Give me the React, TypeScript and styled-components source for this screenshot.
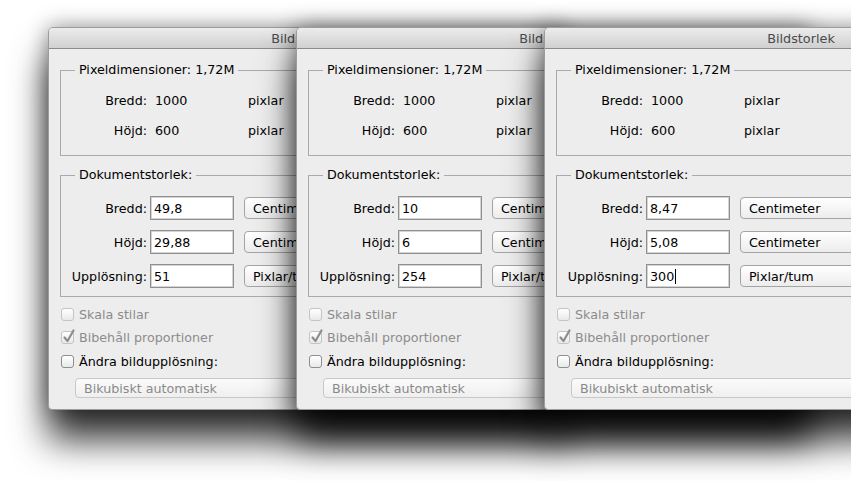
import styled, { createGlobalStyle } from "styled-components";

const GlobalStyle = createGlobalStyle`
  html, body {
    margin: 0;
    padding: 0;
    background: #fff;
  }
  body {
    font-family: "DejaVu Sans", "Liberation Sans", sans-serif;
  }
`;

const Desktop = styled.div`
  position: relative;
  width: 851px;
  height: 481px;
  overflow: hidden;
  background: #fff;
`;

const Window = styled.div<{ $left: number }>`
  position: absolute;
  top: 27px;
  left: ${(p) => p.$left}px;
  width: 514px;
  height: 383px;
  box-sizing: border-box;
  display: flex;
  flex-direction: column;
  background: #ededed;
  border: 1px solid #9c9c9c;
  border-radius: 5px 5px 4px 4px;
  box-shadow: 0 30px 36px rgba(0, 0, 0, 0.8), 0 0 22px rgba(0, 0, 0, 0.42);
  font-size: 12.7px;
  color: #000;
`;

const TitleBar = styled.div`
  flex: none;
  height: 20px;
  display: flex;
  align-items: center;
  justify-content: center;
  border-bottom: 1px solid #8b8b8b;
  border-radius: 4px 4px 0 0;
  background: linear-gradient(#ececec, #d0d0d0);
  font-size: 12.8px;
  color: #4a4a4a;
`;

const Body = styled.div`
  display: flex;
  flex-direction: column;
  padding: 13px 0 0 11px;
`;

const Group = styled.fieldset<{ $pad: string; $gap: number }>`
  margin: 0 0 11px 0;
  width: 400px;
  min-inline-size: 0;
  box-sizing: border-box;
  border: 1px solid #aaaaaa;
  padding: ${(p) => p.$pad};
  display: flex;
  flex-direction: column;
  gap: ${(p) => p.$gap}px;
`;

const Legend = styled.legend`
  margin-left: 14px;
  padding: 0 4px;
  line-height: 16px;
`;

const FieldRow = styled.div<{ $h: number }>`
  display: grid;
  grid-template-columns: 86px 84px 125px;
  column-gap: 3px;
  align-items: center;
  height: ${(p) => p.$h}px;
`;

const Label = styled.span`
  text-align: right;
`;

const Value = styled.span`
  padding-left: 5px;
`;

const Unit = styled.span`
  margin-left: 7px;
  padding-left: 4px;
`;

const Input = styled.div`
  height: 24px;
  box-sizing: border-box;
  display: flex;
  align-items: center;
  padding-left: 3px;
  background: #fff;
  border: 1px solid #8f8f8f;
  box-shadow: inset 0 0 0 1px #d4d4d4;
`;

const Caret = styled.span`
  display: inline-block;
  width: 1px;
  height: 15px;
  margin-left: 1px;
  background: #000;
`;

const Popup = styled.div`
  margin-left: 7px;
  height: 22px;
  box-sizing: border-box;
  display: flex;
  align-items: center;
  padding-left: 8px;
  border: 1px solid #a4a4a4;
  border-radius: 4px;
  background: linear-gradient(#ffffff, #ececec);
  white-space: nowrap;
  overflow: hidden;
`;

const Options = styled.div`
  display: flex;
  flex-direction: column;
  gap: 3.5px;
  margin-top: -4px;
`;

const CheckRow = styled.div<{ $disabled?: boolean }>`
  height: 20px;
  display: flex;
  align-items: center;
  gap: 5px;
  padding-left: 1px;
  color: ${(p) => (p.$disabled ? "#8c8c8c" : "#000")};
`;

const Box = styled.span<{ $disabled?: boolean }>`
  position: relative;
  width: 13px;
  height: 13px;
  box-sizing: border-box;
  border: 1px solid ${(p) => (p.$disabled ? "#c4c4c4" : "#8e8e8e")};
  border-radius: 3px;
  background: linear-gradient(#ffffff, #e9e9e9);
  flex: none;
`;

const Tick = styled.svg`
  position: absolute;
  left: 0;
  top: -4px;
`;

const Resample = styled.div`
  margin: 7px 0 0 15px;
  width: 340px;
  height: 20px;
  box-sizing: border-box;
  display: flex;
  align-items: center;
  padding-left: 8px;
  border: 1px solid #c8c8c8;
  border-radius: 4px;
  background: linear-gradient(#fbfbfb, #efefef);
  color: #8a8a8a;
`;

type Doc = {
  left: number;
  width: string;
  height: string;
  res: string;
  caret?: boolean;
};

const docs: Doc[] = [
  { left: 48, width: "49,8", height: "29,88", res: "51" },
  { left: 296, width: "10", height: "6", res: "254" },
  { left: 544, width: "8,47", height: "5,08", res: "300", caret: true },
];

function ImageSizeDialog({ doc }: { doc: Doc }) {
  const fields = [
    { label: "Bredd:", value: doc.width, unit: "Centimeter" },
    { label: "Höjd:", value: doc.height, unit: "Centimeter" },
    { label: "Upplösning:", value: doc.res, unit: "Pixlar/tum", caret: doc.caret },
  ];
  return (
    <Window $left={doc.left}>
      <TitleBar>Bildstorlek</TitleBar>
      <Body>
        <Group $pad="12px 0 15px 0" $gap={10}>
          <Legend>Pixeldimensioner: 1,72M</Legend>
          <FieldRow $h={20}>
            <Label>Bredd:</Label>
            <Value>1000</Value>
            <Unit>pixlar</Unit>
          </FieldRow>
          <FieldRow $h={20}>
            <Label>Höjd:</Label>
            <Value>600</Value>
            <Unit>pixlar</Unit>
          </FieldRow>
        </Group>
        <Group $pad="13px 0 8px 0" $gap={10}>
          <Legend>Dokumentstorlek:</Legend>
          {fields.map((f) => (
            <FieldRow $h={24} key={f.label}>
              <Label>{f.label}</Label>
              <Input>
                {f.value}
                {f.caret && <Caret />}
              </Input>
              <Popup>{f.unit}</Popup>
            </FieldRow>
          ))}
        </Group>
        <Options>
          <CheckRow $disabled>
            <Box $disabled />
            Skala stilar
          </CheckRow>
          <CheckRow $disabled>
            <Box $disabled>
              <Tick width="14" height="16" viewBox="0 0 14 16">
                <path
                  d="M2.5 9.5 L5.5 13 L11.5 2.5"
                  fill="none"
                  stroke="#8e8e8e"
                  strokeWidth="2.2"
                  strokeLinecap="round"
                  strokeLinejoin="round"
                />
              </Tick>
            </Box>
            Bibehåll proportioner
          </CheckRow>
          <CheckRow>
            <Box />
            Ändra bildupplösning:
          </CheckRow>
        </Options>
        <Resample>Bikubiskt automatisk</Resample>
      </Body>
    </Window>
  );
}

export default function App() {
  return (
    <>
      <GlobalStyle />
      <Desktop>
        {docs.map((d) => (
          <ImageSizeDialog doc={d} key={d.left} />
        ))}
      </Desktop>
    </>
  );
}
